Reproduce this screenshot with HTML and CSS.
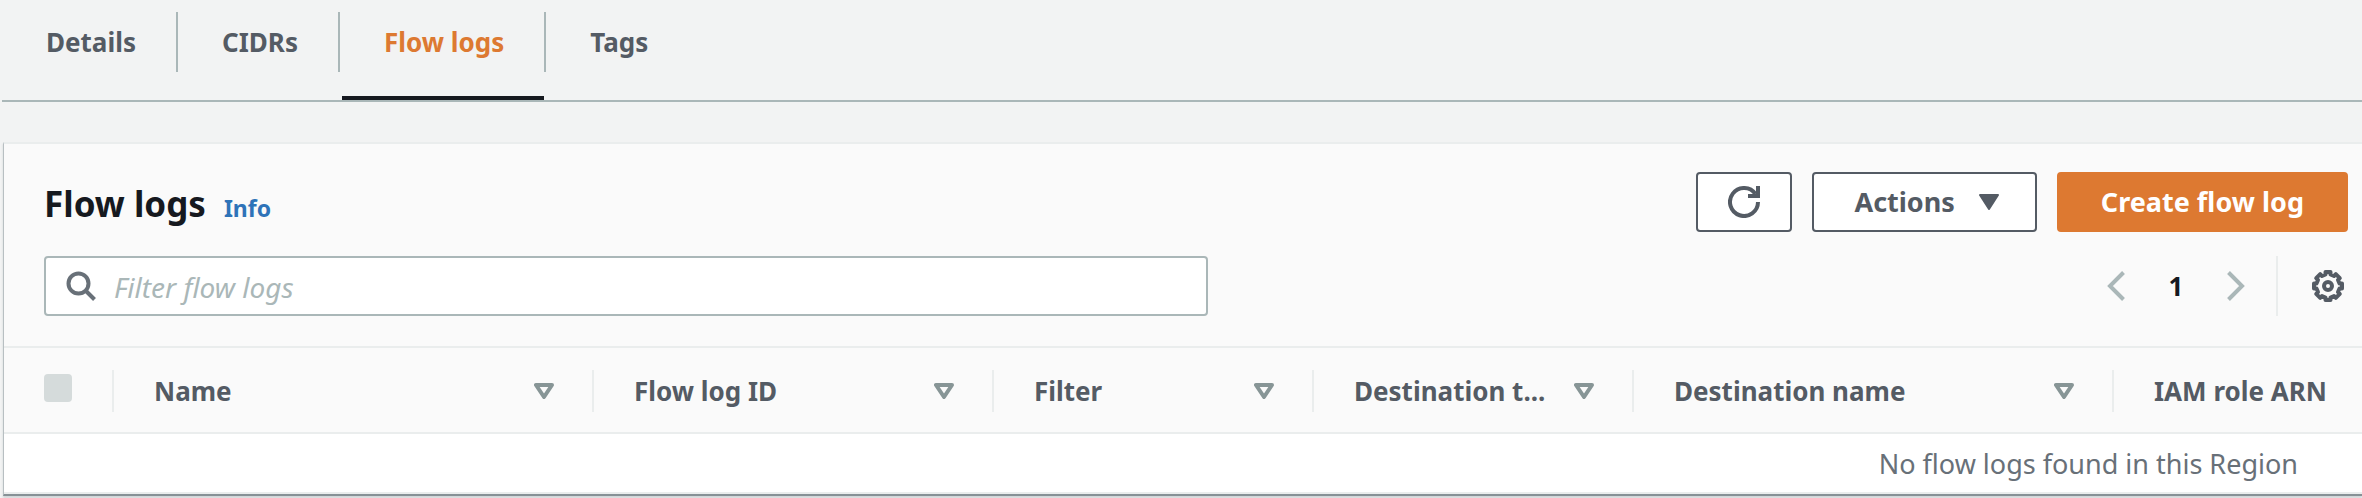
FILE: index.html
```html
<!DOCTYPE html>
<html lang="en">
<head>
<meta charset="utf-8">
<title>Flow logs</title>
<link rel="stylesheet" href="styles.css">
</head>
<body>
<nav class="tabs" aria-label="VPC sections">
  <a class="tab" href="#details"><span class="tab-label">Details</span></a>
  <a class="tab" href="#cidrs"><span class="tab-label">CIDRs</span></a>
  <a class="tab tab-active" href="#flow-logs" aria-current="page"><span class="tab-label">Flow logs</span></a>
  <a class="tab" href="#tags"><span class="tab-label">Tags</span></a>
</nav>
<main class="panel">
  <header class="panel-header">
    <div class="title-row">
      <div class="title">
        <h1 class="heading">Flow logs</h1>
        <a class="info" href="#info">Info</a>
      </div>
      <div class="actions">
        <button class="button button-icon" type="button" aria-label="Refresh">
          <svg class="icon" viewBox="0 0 32 32" fill="none" stroke="currentColor" stroke-width="4"><path d="M30 16A14 14 0 1 1 27.500 8"/><path d="M30 0v10H20"/></svg>
        </button>
        <button class="button button-menu" type="button">Actions
          <svg class="caret" viewBox="0 0 20 16" fill="currentColor" stroke="currentColor" stroke-width="2" stroke-linejoin="round"><path d="M1 1h18L10 15z"/></svg>
        </button>
        <button class="button button-primary" type="button">Create flow log</button>
      </div>
    </div>
    <div class="tools-row">
      <label class="search">
        <svg class="search-icon" viewBox="0 0 30 30" fill="none" stroke="currentColor" stroke-width="4"><circle cx="12.500" cy="12.500" r="10"/><path d="M19.500 19.500L28.500 28.500"/></svg>
        <input class="search-input" type="text" placeholder="Filter flow logs" aria-label="Filter flow logs">
      </label>
      <div class="pager">
        <button class="pager-button" type="button" aria-label="Previous page">
          <svg class="chevron" viewBox="0 0 18 30" fill="none" stroke="currentColor" stroke-width="4"><path d="M16.500 1.500L3 15l13.500 13.500"/></svg>
        </button>
        <span class="page-number">1</span>
        <button class="pager-button" type="button" aria-label="Next page">
          <svg class="chevron" viewBox="0 0 18 30" fill="none" stroke="currentColor" stroke-width="4"><path d="M1.500 1.500L15 15L1.500 28.500"/></svg>
        </button>
        <button class="settings" type="button" aria-label="Preferences">
          <svg class="icon" viewBox="0 0 32 32" fill="none" stroke="currentColor" stroke-width="4"><path stroke-linejoin="round" d="M13.500 2h5v2.500l3.500 1.500 1.800-1.800 4 4L26 10l1.500 3.500H30v5h-2.500L26 22l1.800 1.800-4 4L22 26l-3.500 1.500V30h-5v-2.500L10 26l-1.800 1.800-4-4L6 22l-1.500-3.500H2v-5h2.500L6 10 4.200 8.200l4-4L10 6l3.500-1.500z"/><circle cx="16" cy="16" r="4"/></svg>
        </button>
      </div>
    </div>
  </header>
  <div class="table-scroll">
    <table class="table">
      <colgroup><col class="col-check"><col class="col-wide"><col class="col-medium"><col class="col-narrow"><col class="col-narrow"><col class="col-wide"><col></colgroup>
      <thead>
        <tr>
          <th class="cell"><div class="head"><input class="checkbox" type="checkbox" aria-label="Select all" disabled></div></th>
          <th class="cell"><div class="head"><span class="head-text">Name</span><svg class="sort" viewBox="0 0 20 16"><path d="M2 2h16L10 14z"/></svg></div></th>
          <th class="cell"><div class="head"><span class="head-text">Flow log ID</span><svg class="sort" viewBox="0 0 20 16"><path d="M2 2h16L10 14z"/></svg></div></th>
          <th class="cell"><div class="head"><span class="head-text">Filter</span><svg class="sort" viewBox="0 0 20 16"><path d="M2 2h16L10 14z"/></svg></div></th>
          <th class="cell"><div class="head"><span class="head-text">Destination t...</span><svg class="sort" viewBox="0 0 20 16"><path d="M2 2h16L10 14z"/></svg></div></th>
          <th class="cell"><div class="head"><span class="head-text">Destination name</span><svg class="sort" viewBox="0 0 20 16"><path d="M2 2h16L10 14z"/></svg></div></th>
          <th class="cell"><div class="head head-last"><span class="head-text">IAM role ARN</span></div></th>
        </tr>
      </thead>
      <tbody>
        <tr><td class="empty" colspan="7">No flow logs found in this Region</td></tr>
      </tbody>
    </table>
  </div>
</main>
</body>
</html>
```
FILE: styles.css
```css
* {
  box-sizing: border-box;
}

body {
  margin: 0;
  background: #f2f3f3;
  color: #545b64;
  font: 26px/36px "Noto Sans", "Open Sans", sans-serif;
}

button,
input {
  font: inherit;
  color: inherit;
}

.tabs {
  display: flex;
  gap: 4px;
  margin-left: 2px;
  padding: 12px 0 0 2px;
  border-bottom: 2px solid #aab7b8;
  font-weight: 700;
}

.tab {
  color: #545b64;
  text-decoration: none;
  padding-bottom: 24px;
  border-bottom: 4px solid transparent;
}

.tab-label {
  display: block;
  margin-right: -2px;
  padding: 12px 40px 12px 42px;
  border-right: 2px solid #aab7b8;
}

.tab:last-child .tab-label {
  border-right-color: transparent;
}

.tab-active {
  color: #dd7931;
  border-bottom-color: #16191f;
}

.panel {
  margin: 40px 0 4px 3px;
  border-top: 2px solid #eaeded;
  border-left: 1px solid #b8bfc2;
  border-bottom: 2px solid #879196;
  background: #fafafa;
  box-shadow: 0 2px 2px #cfd5d7;
}

.panel-header {
  padding: 28px 14px 30px 40px;
}

.title-row,
.tools-row {
  display: flex;
  align-items: center;
  justify-content: space-between;
}

.tools-row {
  margin-top: 24px;
}

.title {
  display: flex;
  align-items: baseline;
  gap: 18px;
  padding-top: 4px;
}

.heading {
  margin: 0;
  color: #16191f;
  font-size: 35px;
  line-height: 44px;
}

.info {
  color: #2e73b8;
  font-size: 23px;
  font-weight: 700;
  text-decoration: none;
}

.actions {
  display: flex;
  gap: 20px;
}

.button {
  display: flex;
  align-items: center;
  justify-content: center;
  height: 60px;
  padding: 0 40px;
  border: 2px solid #545b64;
  border-radius: 4px;
  background: #fff;
  font-size: 27px;
  font-weight: 700;
}

.button-icon {
  padding: 0 30px;
}

.button-menu {
  gap: 24px;
  padding-right: 36px;
}

.button-primary {
  padding: 0 42px;
  border-color: #dd7931;
  background: #dd7931;
  color: #fff;
}

.icon {
  width: 32px;
  height: 32px;
}

.caret {
  width: 20px;
  height: 16px;
}

.search {
  display: flex;
  align-items: center;
  gap: 18px;
  width: 50.5%;
  height: 60px;
  padding: 0 20px;
  border: 2px solid #aab7b8;
  border-radius: 4px;
  background: #fff;
}

.search-icon {
  flex: none;
  width: 30px;
  height: 30px;
  color: #687078;
}

.search-input {
  flex: 1;
  min-width: 0;
  padding: 2px 0 0;
  border: 0;
  outline: 0;
  background: transparent;
  font-size: 28px;
}

.search-input::placeholder {
  color: #aab7b8;
  font-style: italic;
  opacity: 1;
}

.pager {
  display: flex;
  align-items: center;
}

.pager-button,
.settings {
  display: flex;
  align-items: center;
  padding: 0;
  border: 0;
  background: none;
}

.pager-button {
  color: #aab7b8;
}

.chevron {
  width: 18px;
  height: 30px;
}

.page-number {
  width: 102px;
  color: #16191f;
  font-weight: 700;
  text-align: center;
}

.settings {
  height: 60px;
  margin-left: 31px;
  padding: 0 4px 0 34px;
  border-left: 2px solid #eaeded;
}

.table-scroll {
  overflow: hidden;
  border-bottom: 2px solid #eaeded;
}

.table {
  width: 100%;
  table-layout: fixed;
  border-collapse: collapse;
}

.col-check {
  width: 110px;
}

.col-wide {
  width: 480px;
}

.col-medium {
  width: 400px;
}

.col-narrow {
  width: 320px;
}

.cell {
  padding: 22px 0 20px;
  border-top: 2px solid #eaeded;
  border-bottom: 2px solid #eaeded;
  text-align: left;
}

.head {
  display: flex;
  align-items: center;
  gap: 16px;
  height: 42px;
  padding: 0 38px 0 40px;
  border-right: 2px solid #eaeded;
}

.head-last {
  padding-right: 0;
  border-right: 0;
}

.head-text {
  flex: 1;
  white-space: nowrap;
}

.sort {
  flex: none;
  width: 20px;
  height: 16px;
  fill: none;
  stroke: #879596;
  stroke-width: 4;
  stroke-linejoin: round;
}

.checkbox {
  appearance: none;
  flex: none;
  width: 28px;
  height: 28px;
  margin: 0 0 6px;
  border-radius: 4px;
  background: #d5dbdb;
}

.empty {
  padding: 12px 64px 10px;
  background: #fff;
  color: #687078;
  font-size: 27px;
  text-align: right;
}
```
